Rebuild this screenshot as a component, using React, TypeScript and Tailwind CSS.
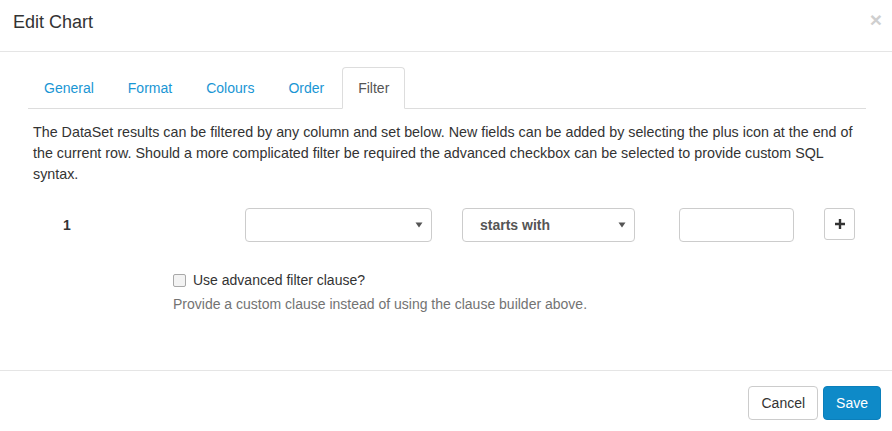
import React from "react";

function Caret() {
  return (
    <svg width="8" height="6" viewBox="0 0 8 6" className="shrink-0">
      <path d="M0.5 0.5 L7.5 0.5 L4 5.5 Z" fill="#555" />
    </svg>
  );
}

export default function App() {
  const tabs = ["General", "Format", "Colours", "Order"];
  return (
    <div
      className="w-[892px] h-[431px] bg-white text-[14px] leading-[20px] text-[#333] overflow-hidden"
      style={{ fontFamily: '"Liberation Sans", Arial, Helvetica, sans-serif' }}
    >
      {/* header */}
      <div className="h-[52px] border-b border-[#e5e5e5] flex justify-between pl-[13px] pr-[10px] pt-[9px]">
        <h4 className="text-[18px] leading-[26px] text-[#333]">Edit Chart</h4>
        <span className="text-[21px] leading-[21px] font-bold text-[#cfcfcf]">×</span>
      </div>

      {/* body */}
      <div className="h-[318px] pt-[15px] pl-[28px] pr-[26px]">
        <ul className="flex border-b border-[#ddd] h-[42px]">
          {tabs.map((t) => (
            <li key={t} className="mr-[2px] -mb-px">
              <span className="block px-[15px] py-[10px] border border-transparent rounded-t-[4px] text-[#1a96d4] leading-[20px]">
                {t}
              </span>
            </li>
          ))}
          <li className="-mb-px">
            <span className="block px-[15px] py-[10px] border border-[#ddd] border-b-white bg-white rounded-t-[4px] text-[#555] leading-[20px]">
              Filter
            </span>
          </li>
        </ul>

        <div className="px-[5px]">
          <p className="mt-[13px] leading-[21px] text-[14.3px] whitespace-nowrap">
            The DataSet results can be filtered by any column and set below. New fields can be added by selecting the plus icon at the end of
            <br />
            the current row. Should a more complicated filter be required the advanced checkbox can be selected to provide custom SQL
            <br />
            syntax.
          </p>

          <div className="flex items-center h-[34px] mt-[23px]">
            <div className="w-[212px] pl-[30px] font-bold">1</div>
            <div className="w-[187px] h-[34px] border border-[#ccc] rounded-[4px] flex items-center justify-end pr-[8px]">
              <Caret />
            </div>
            <div className="ml-[30px] w-[173px] h-[34px] border border-[#ccc] rounded-[4px] flex items-center justify-between pl-[17px] pr-[8px]">
              <span className="font-bold text-[#555]">starts with</span>
              <Caret />
            </div>
            <div className="ml-[44px] w-[115px] h-[34px] border border-[#ccc] rounded-[4px]" />
            <div className="ml-[30px] w-[31px] h-[32px] -mt-[2px] border border-[#ccc] rounded-[3px] flex items-center justify-center">
              <svg width="10" height="10" viewBox="0 0 10 10">
                <path d="M5 0 V10 M0 5 H10" stroke="#333" strokeWidth="2.4" />
              </svg>
            </div>
          </div>

          <div className="ml-[140px] mt-[28px] flex items-center h-[20px]">
            <span className="w-[13px] h-[13px] border border-[#a9a9a9] rounded-[2px] bg-[#f3f3f3] mr-[7px]" />
            <span>Use advanced filter clause?</span>
          </div>
          <div className="ml-[140px] mt-[4px] text-[#737373]">
            Provide a custom clause instead of using the clause builder above.
          </div>
        </div>
      </div>

      {/* footer */}
      <div className="border-t border-[#e5e5e5] pt-[15px] pr-[11px] flex justify-end gap-[5px]">
        <button className="h-[34px] px-[12px] border border-[#ccc] rounded-[4px] bg-white text-[#333] leading-[20px]">
          Cancel
        </button>
        <button className="h-[34px] px-[12px] border border-[#0b7fbb] rounded-[4px] bg-[#0e8ac8] text-white leading-[20px]">
          Save
        </button>
      </div>
    </div>
  );
}
